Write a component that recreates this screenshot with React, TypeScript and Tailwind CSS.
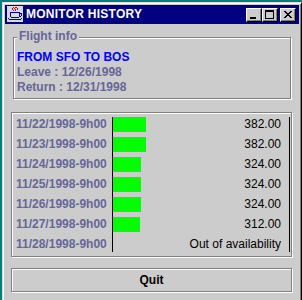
import type { SVGProps } from "react";

type Row = { date: string; price: number | null };

const rows: Row[] = [
  { date: "11/22/1998-9h00", price: 382 },
  { date: "11/23/1998-9h00", price: 382 },
  { date: "11/24/1998-9h00", price: 324 },
  { date: "11/25/1998-9h00", price: 324 },
  { date: "11/26/1998-9h00", price: 324 },
  { date: "11/27/1998-9h00", price: 312 },
  { date: "11/28/1998-9h00", price: null },
];

// petite tasse java de la barre de titre
function CupIcon(props: SVGProps<SVGSVGElement>) {
  return (
    <svg viewBox="0 0 16 16" width={16} height={16} shapeRendering="crispEdges" {...props}>
      <rect x="0" y="0" width="16" height="16" fill="#d8d8e8" />
      <path d="M6 1h1v1h-1zM8 1h2v1h-2zM5 2h1v2h-1zM7 2h1v1h-1zM10 2h1v2h-1zM6 4h1v1h-1zM8 3h1v2h-1z" fill="#e00000" />
      <path d="M3 6h10v1h-10zM3 7h1v4h-1zM12 7h1v4h-1zM4 11h8v1h-8zM13 7h2v1h-2zM14 8h1v2h-1zM13 10h1v1h-1z" fill="#000080" />
      <path d="M1 12h1v1h-1zM14 12h1v1h-1zM2 13h12v1h-12z" fill="#000080" />
    </svg>
  );
}

function TitleButton({ children, className = "" }: { children: React.ReactNode; className?: string }) {
  return (
    <div
      className={
        "relative w-[16px] h-[14px] bg-[#cccccc] border-t border-l border-t-white border-l-white border-r border-b border-r-black border-b-black shadow-[inset_-1px_-1px_0_#808080] " +
        className
      }
    >
      {children}
    </div>
  );
}

export default function App() {
  return (
    <div className="w-[302px] h-[300px] overflow-hidden bg-[#008080] pl-[2px] pt-[2px] font-['Liberation_Sans',Arial,sans-serif]">
      <div className="w-[300px] h-[320px] bg-[#cccccc] border border-t-[#dfdfdf] border-l-[#dfdfdf] border-r-black border-b-black p-[2px] shadow-[inset_1px_1px_0_#fff,inset_-1px_-1px_0_#808080]">
        {/* barre de titre */}
        <div className="h-[19px] bg-[#000080] flex items-start pl-[2px] pr-[3px]">
          <CupIcon className="mt-[1px] shrink-0" />
          <span className="ml-[3px] text-white text-[12px] font-bold leading-[19px] tracking-[0.25px]">
            MONITOR HISTORY
          </span>
          <div className="ml-auto mt-[3px] flex">
            <TitleButton>
              <div className="absolute left-[3px] top-[8px] w-[6px] h-[2px] bg-black" />
            </TitleButton>
            <TitleButton>
              <div className="absolute left-[2px] top-[1px] w-[9px] h-[9px] border border-t-2 border-black" />
            </TitleButton>
            <TitleButton className="ml-[2px]">
              <svg viewBox="0 0 14 12" width={14} height={12} className="absolute left-0 top-0" shapeRendering="crispEdges">
                <path d="M3 2h2v1h-2zM9 2h2v1h-2zM4 3h2v1h-2zM8 3h2v1h-2zM5 4h4v1h-4zM6 5h2v1h-2zM5 6h4v1h-4zM4 7h2v1h-2zM8 7h2v1h-2zM3 8h2v1h-2zM9 8h2v1h-2z" fill="#000" />
              </svg>
            </TitleButton>
          </div>
        </div>

        <div className="px-[6px] pt-[13px]">
          {/* Flight info */}
          <div className="relative ml-[2px] w-[278px] h-[62px] border border-[#808080] shadow-[inset_1px_1px_0_#fff,1px_1px_0_#fff] pl-[3px] pt-[12px] text-[12px] font-bold leading-[15px]">
            <span className="absolute left-[3px] top-[-9px] px-[2px] bg-[#cccccc] text-[#666699] leading-[15px]">
              Flight info
            </span>
            <div className="text-[#0000ff]">FROM SFO TO BOS</div>
            <div className="text-[#666699]">Leave : 12/26/1998</div>
            <div className="text-[#666699]">Return : 12/31/1998</div>
          </div>

          {/* historique */}
          <div className="mt-[13px] w-[281px] h-[145px] border border-[#808080] shadow-[inset_1px_1px_0_#fff,1px_1px_0_#fff] pt-[4px] pr-[1px] text-[12px] leading-[15px]">
            {rows.map((r, i) => (
              <div key={r.date} className={"flex " + (i === rows.length - 1 ? "h-[15px]" : "h-[20px]")}>
                <div className="w-[100px] pl-[4px] font-bold text-[#666699]">{r.date}</div>
                <div className="flex-1 flex border-l border-r border-black">
                  {r.price !== null && (
                    <div className="h-[15px] bg-[#00ff00]" style={{ width: Math.round((r.price * 33) / 382) }} />
                  )}
                  <div className="ml-auto pr-[8px] text-black">
                    {r.price !== null ? r.price.toFixed(2) : "Out of availability"}
                  </div>
                </div>
              </div>
            ))}
          </div>

          <button className="mt-[11px] w-[281px] h-[24px] border border-[#808080] shadow-[inset_1px_1px_0_#fff,1px_1px_0_#fff] text-[12px] font-bold text-black">
            Quit
          </button>
        </div>
      </div>
    </div>
  );
}
